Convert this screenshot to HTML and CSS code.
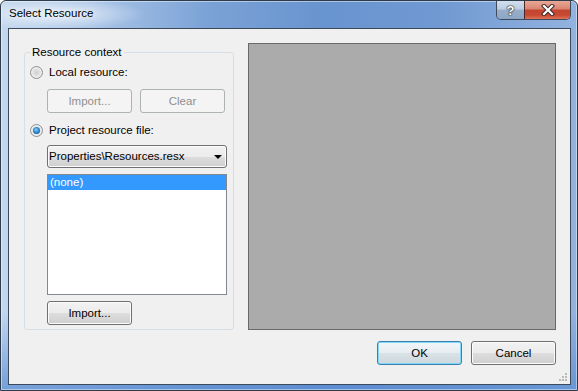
FILE: index.html
```html
<!DOCTYPE html>
<html lang="en">
<head>
  <meta charset="UTF-8">
  <title>Select Resource</title>
  <link rel="stylesheet" href="styles.css">
</head>
<body>
  <div class="window">
    <div class="titlebar">
      <span class="title">Select Resource</span>
      <div class="caption-buttons">
        <div class="cap-btn help">?</div>
        <div class="cap-btn close">
          <svg width="14" height="12" viewBox="0 0 14 12">
            <path d="M3 2 L11 10 M11 2 L3 10" stroke="#3b2a28" stroke-width="4.2" stroke-linecap="square" fill="none"/>
            <path d="M3 2 L11 10 M11 2 L3 10" stroke="#ffffff" stroke-width="2.2" stroke-linecap="square" fill="none"/>
          </svg>
        </div>
      </div>
    </div>

    <div class="client">
      <div class="main">
        <fieldset class="group">
          <legend>Resource context</legend>
          <div class="radio-row"><span class="radio"></span>Local resource:</div>
          <div class="btn-row">
            <button class="btn" disabled>Import...</button>
            <button class="btn" disabled>Clear</button>
          </div>
          <div class="radio-row second"><span class="radio checked"></span>Project resource file:</div>
          <div class="combo">Properties\Resources.resx<span class="arrow"></span></div>
          <div class="listbox">
            <div class="item selected">(none)</div>
          </div>
          <button class="btn import">Import...</button>
        </fieldset>
        <div class="preview"></div>
      </div>
      <div class="footer">
        <button class="btn default">OK</button>
        <button class="btn">Cancel</button>
      </div>
      <svg class="grip" width="10" height="10" viewBox="0 0 10 10">
        <rect x="7" y="1" width="2" height="2" fill="#b9b9b9"/>
        <rect x="4" y="4" width="2" height="2" fill="#b9b9b9"/>
        <rect x="7" y="4" width="2" height="2" fill="#b9b9b9"/>
        <rect x="1" y="7" width="2" height="2" fill="#b9b9b9"/>
        <rect x="4" y="7" width="2" height="2" fill="#b9b9b9"/>
        <rect x="7" y="7" width="2" height="2" fill="#b9b9b9"/>
      </svg>
    </div>
  </div>
</body>
</html>
```

FILE: styles.css
```css
body {
  margin: 0;
  font-family: "Liberation Sans", Arial, sans-serif;
  font-size: 11.5px;
  color: #000;
}

.window {
  width: 578px;
  height: 391px;
  box-sizing: border-box;
  border: 1px solid #2e3b4b;
  border-radius: 6px 6px 0 0;
  background:
    radial-gradient(ellipse 90px 16px at 55px 13px, rgba(255,255,255,0.7), rgba(255,255,255,0) 100%),
    linear-gradient(to bottom, rgba(90,140,210,0) 0%, rgba(90,140,210,0) 80%, rgba(90,140,210,0.75) 100%),
    linear-gradient(to right, #c3d7ee 0%, #a9c4e7 16%, #7ba2d6 36%, #6894cf 56%, #7099d2 76%, #93b3df 100%);
  box-shadow: inset 0 0 0 1px rgba(255,255,255,0.45);
  display: flex;
  flex-direction: column;
}

.titlebar {
  height: 27px;
  flex: none;
  display: flex;
  justify-content: space-between;
  align-items: flex-start;
  padding: 0 6px 0 8px;
}

.title {
  padding-top: 4px;
  line-height: 16px;
  color: #000;
  text-shadow: 0 0 6px rgba(255,255,255,0.9);
}

.caption-buttons {
  display: flex;
  height: 19px;
  box-sizing: border-box;
  border: 1px solid #3e4a5a;
  border-top: none;
  border-radius: 0 0 5px 5px;
  overflow: hidden;
}

.cap-btn {
  display: flex;
  align-items: center;
  justify-content: center;
}

.help {
  width: 27px;
  background: linear-gradient(#d3dfee 0%, #bccde3 45%, #98aecb 50%, #8ea6c6 100%);
  color: #fff;
  font-weight: bold;
  font-size: 13px;
  text-shadow: 0 0 1px #222, 0 0 1px #222, 0 0 2px #333;
}

.close {
  width: 45px;
  border-left: 1px solid #4a2a26;
  background: linear-gradient(#e9a897 0%, #d98570 45%, #c2432f 50%, #c94b33 80%, #de7458 100%);
}

.client {
  position: relative;
  flex: 1;
  margin: 0 6px 5px 7px;
  border: 1px solid #3c4a5c;
  background: #f0f0f0;
  padding: 14px 14px 19px 15px;
  display: flex;
  flex-direction: column;
}

.main {
  flex: 1;
  display: flex;
  gap: 14px;
}

.group {
  width: 210px;
  box-sizing: border-box;
  margin: 0;
  padding: 0 6px 4px 5px;
  border: 1px solid #d5dfe5;
  border-radius: 3px;
  min-width: 0;
  display: flex;
  flex-direction: column;
}

.group legend {
  padding: 0 2px;
  line-height: 18px;
}

.radio-row {
  display: flex;
  align-items: center;
  gap: 6px;
  height: 16px;
  line-height: 16px;
  margin-top: 3px;
}

.radio-row.second {
  margin-top: 9px;
}

.radio {
  width: 13px;
  height: 13px;
  box-sizing: border-box;
  border-radius: 50%;
  border: 1px solid #8e8f8f;
  background: radial-gradient(circle, #cfcfcf 0%, #e2e2e2 45%, #f3f3f3 75%, #ffffff 100%);
  position: relative;
}

.radio.checked::after {
  content: "";
  position: absolute;
  left: 2px;
  top: 2px;
  width: 7px;
  height: 7px;
  border-radius: 50%;
  background: radial-gradient(circle at 45% 40%, #8fd3ff 0%, #2f8ad1 45%, #0f4d86 100%);
}

.btn-row {
  display: flex;
  gap: 8px;
  margin: 9px 0 0 17px;
}

.btn {
  width: 85px;
  height: 24px;
  box-sizing: border-box;
  padding: 0;
  border: 1px solid #707070;
  border-radius: 3px;
  font: inherit;
  color: #000;
  background: linear-gradient(#f2f2f2 0%, #ebebeb 50%, #dddddd 51%, #cfcfcf 100%);
  box-shadow: inset 0 0 0 1px #fcfcfc;
}

.btn:disabled {
  border-color: #adb2b5;
  background: #f4f4f4;
  color: #8f8f8f;
  box-shadow: none;
}

.btn.default {
  border-color: #3c7fb1;
  background: linear-gradient(#f1f6f9 0%, #e6edf1 50%, #d9e2e7 51%, #cdd7dd 100%);
  box-shadow: inset 0 0 0 1px #7fd9f7;
}

.combo {
  position: relative;
  margin: 7px 0 0 17px;
  height: 23px;
  box-sizing: border-box;
  border: 1px solid #707070;
  border-radius: 3px;
  padding-left: 1px;
  line-height: 21px;
  background: linear-gradient(#f2f2f2 0%, #ebebeb 50%, #dddddd 51%, #cfcfcf 100%);
  box-shadow: inset 0 0 0 1px #fcfcfc;
}

.arrow {
  position: absolute;
  right: 4px;
  top: 9px;
  width: 0;
  height: 0;
  border-left: 4px solid transparent;
  border-right: 4px solid transparent;
  border-top: 4px solid #000;
}

.listbox {
  flex: 1;
  margin: 6px 0 0 17px;
  border: 1px solid #828790;
  background: #fff;
}

.item {
  height: 15px;
  line-height: 15px;
  padding-left: 2px;
}

.item.selected {
  background: #3399ff;
  color: #fff;
}

.btn.import {
  margin: 6px 0 0 17px;
}

.preview {
  flex: 1;
  background: #ababab;
  border: 1px solid #696969;
}

.footer {
  margin-top: 11px;
  display: flex;
  justify-content: flex-end;
  gap: 9px;
}

.grip {
  position: absolute;
  right: 2px;
  bottom: 2px;
}
```
